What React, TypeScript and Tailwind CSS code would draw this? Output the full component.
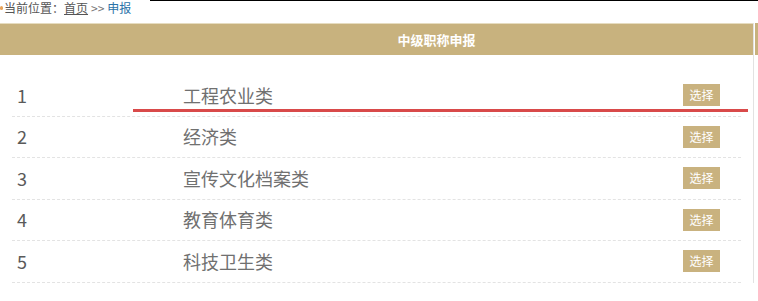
import React from "react"

const rows = [
  { no: 1, name: "工程农业类" },
  { no: 2, name: "经济类" },
  { no: 3, name: "宣传文化档案类" },
  { no: 4, name: "教育体育类" },
  { no: 5, name: "科技卫生类" },
]

export default function App() {
  return (
    <div
      className="relative w-[758px] h-[301px] bg-white overflow-hidden"
      style={{ fontFamily: '"Microsoft YaHei", "Noto Sans CJK SC", sans-serif' }}
    >
      {/* top edge */}
      <div className="absolute top-0 left-[150px] right-0 h-[1px] bg-black" />

      {/* breadcrumb */}
      <div className="flex items-center h-[16px] pl-[4px] text-[12px] leading-[16px] text-[#555]">
        <span className="absolute left-0 top-[6px] w-[3px] h-[4px] rounded-full bg-[#e8a35a]" />
        <span>当前位置：</span>
        <span className="underline">首页</span>
        <span className="mx-[3px] text-[#777]">&gt;&gt;</span>
        <span className="text-[#2a73a8]">申报</span>
      </div>

      <div className="mt-[7px] flex">
        <div className="w-[754px] border-r border-[#e2e2e2]">
          {/* header */}
          <div className="h-[32px] pl-[120px] bg-[#c8b27e] border-t border-[#e6dcc0] flex items-center justify-center text-white text-[13px] font-bold">
            中级职称申报
          </div>

          <div className="pt-[20px] px-[12px]">
            {rows.map((r) => (
              <div
                key={r.no}
                className="h-[41.5px] flex items-center border-b border-dashed border-[#e3e3e3]"
              >
                <span className="w-[171px] pl-[5px] text-[18px] text-[#5a5a5a]">{r.no}</span>
                <span className="flex-1 text-[18px] text-[#707070]">{r.name}</span>
                <button className="mr-[21px] w-[37px] h-[22px] bg-[#c9b27f] text-white text-[12px] leading-[22px]">
                  选择
                </button>
              </div>
            ))}
          </div>
        </div>
        <div className="flex-1 h-[32px] ml-[1px] bg-[#c8b27e]" />
      </div>

      {/* red annotation line */}
      <div className="absolute left-[133px] top-[109px] w-[615px] h-[3px] bg-[#d94a4a]" />
    </div>
  )
}
